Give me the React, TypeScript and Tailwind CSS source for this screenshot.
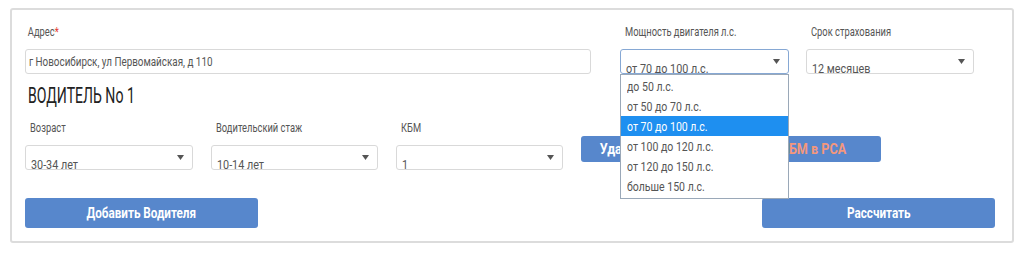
import { ReactNode } from "react";

const font = {
  fontFamily: "Roboto, 'Liberation Sans', sans-serif",
};

// the reference uses a condensed face; squeeze Roboto to match
function Narrow({
  children,
  className = "scale-x-[0.72]",
  origin = "origin-left",
}: {
  children: ReactNode;
  className?: string;
  origin?: string;
}) {
  return <span className={`inline-block whitespace-nowrap ${origin} ${className}`}>{children}</span>;
}

function Arrow() {
  return (
    <svg width="7" height="5" viewBox="0 0 7 5" className="shrink-0">
      <path d="M0 0h7L3.5 5z" fill="#555" />
    </svg>
  );
}

type SelectProps = {
  value: string;
  width: string;
  focused?: boolean;
  children?: ReactNode;
};

function Select({ value, width, focused, children }: SelectProps) {
  return (
    <div className={`relative ${width}`}>
      <div
        className={`flex h-[25px] items-start overflow-hidden rounded-[3px] border bg-white pl-[5px] pr-[8px] ${
          focused ? "border-[#86a8d4]" : "border-[#d9d9d9]"
        }`}
      >
        <span className="flex-1 pt-[10px] text-[13.5px] leading-[16px] text-[#555]">
          <Narrow className="scale-x-[0.8]">{value}</Narrow>
        </span>
        <span className="pt-[9px]">
          <Arrow />
        </span>
      </div>
      {children}
    </div>
  );
}

function Field({
  label,
  children,
  className = "",
}: {
  label: ReactNode;
  children: ReactNode;
  className?: string;
}) {
  return (
    <div className={className}>
      <div className="mb-[9px] h-[16px] pl-[5px] text-[13px] leading-[16px] text-[#555]">
        <Narrow>{label}</Narrow>
      </div>
      {children}
    </div>
  );
}

const powers = [
  "до 50 л.с.",
  "от 50 до 70 л.с.",
  "от 70 до 100 л.с.",
  "от 100 до 120 л.с.",
  "от 120 до 150 л.с.",
  "больше 150 л.с.",
];

export default function App() {
  return (
    <div className="min-h-[274px] bg-white pl-[10px] pt-[8px]" style={font}>
      <div className="w-[1004px] rounded-[3px] border-2 border-[#dcdcdc] pb-[13px] pl-[13px] pt-[14px]">
        <div className="flex items-start">
          <Field
            className="w-[566px]"
            label={
              <span className="-ml-[3px]">
                Адрес<span className="text-[#e53935]">*</span>
              </span>
            }
          >
            <div className="flex h-[25px] items-center rounded-[3px] border border-[#d9d9d9] px-[3px] text-[13.5px] text-[#555]">
              <Narrow className="scale-x-[0.73]">г Новосибирск, ул Первомайская, д 110</Narrow>
            </div>
          </Field>
          <Field className="ml-[29px] w-[169px]" label="Мощность двигателя л.с.">
            <Select value="от 70 до 100 л.с." width="w-[169px]" focused>
              <ul className="absolute left-0 top-[25px] z-10 w-[169px] border border-[#9aa8b8] bg-white pb-[2px] pt-[1px]">
                {powers.map((p) => (
                  <li
                    key={p}
                    className={`h-[20px] pl-[6px] text-[13.5px] leading-[20px] ${
                      p === "от 70 до 100 л.с." ? "bg-[#1e8ff0] text-white" : "text-[#555]"
                    }`}
                  >
                    <Narrow className="scale-x-[0.78]">{p}</Narrow>
                  </li>
                ))}
              </ul>
            </Select>
          </Field>
          <Field className="ml-[17px] w-[168px]" label="Срок страхования">
            <Select value="12 месяцев" width="w-[168px]" />
          </Field>
        </div>

        <h2 className="mt-[10px] h-[24px] pl-[3px] text-[22px] leading-[24px] text-[#222]">
          <Narrow className="scale-x-[0.64]">ВОДИТЕЛЬ No 1</Narrow>
        </h2>

        <div className="mt-[12px] flex items-start">
          <Field className="w-[168px]" label="Возраст">
            <Select value="30-34 лет" width="w-[168px]" />
          </Field>
          <Field className="ml-[18px] w-[167px]" label="Водительский стаж">
            <Select value="10-14 лет" width="w-[167px]" />
          </Field>
          <Field className="ml-[18px] w-[167px]" label="КБМ">
            <Select value="1" width="w-[167px]" />
          </Field>
          <button className="ml-[18px] mt-[16px] flex h-[26px] w-[300px] items-center justify-center rounded-[3px] bg-[#5787cc] pr-[16px] text-[14px] font-bold text-white">
            <Narrow className="scale-x-[0.9]" origin="origin-center">
              Удалить водителя<span className="text-[#f4977c]">, проверить КБМ в РСА</span>
            </Narrow>
          </button>
        </div>

        <div className="mt-[28px] flex items-center justify-between pr-[17px]">
          <button className="h-[30px] w-[233px] rounded-[3px] bg-[#5787cc] text-[15px] font-bold text-white">
            <Narrow className="scale-x-[0.78]" origin="origin-center">
              Добавить Водителя
            </Narrow>
          </button>
          <button className="h-[30px] w-[233px] rounded-[3px] bg-[#5787cc] text-[15px] font-bold text-white">
            <Narrow className="scale-x-[0.78]" origin="origin-center">
              Рассчитать
            </Narrow>
          </button>
        </div>
      </div>
    </div>
  );
}
